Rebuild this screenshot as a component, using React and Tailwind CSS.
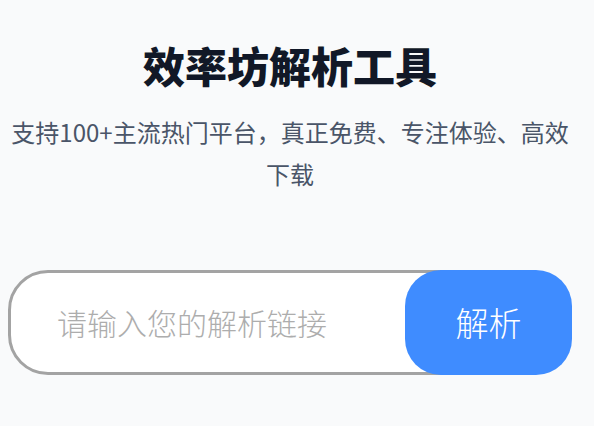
import React from 'react'

export default function App() {
    return (
        <div className="min-h-screen bg-[#f9fafb] font-['Noto_Sans_CJK_SC','Noto_Sans',sans-serif]">
            <div className="w-[579px] pt-[38px] pl-[8px] pr-[7px]">
                <h1 className="text-center text-[42px] leading-[54px] font-black text-[#111827]">效率坊解析工具</h1>

                <p className="mt-[19px] text-center text-[24px] leading-[42px] text-[#4a5568]">
                    支持100+主流热门平台，真正免费、专注体验、高效下载
                </p>

                <div className="mt-[75px] flex items-stretch h-[105px]">
                    <input
                        type="text"
                        placeholder="请输入您的解析链接"
                        className="flex-1 min-w-0 -mr-[140px] bg-white border-[3px] border-[#a3a3a3] rounded-[40px] pl-[46px] text-[30px] font-light text-[#333] placeholder:text-[#adadad] outline-none"
                    />
                    <button className="relative w-[167px] bg-[#3f8cff] rounded-[36px] text-white text-[33px] font-light">
                        解析
                    </button>
                </div>
            </div>
        </div>
    )
}
